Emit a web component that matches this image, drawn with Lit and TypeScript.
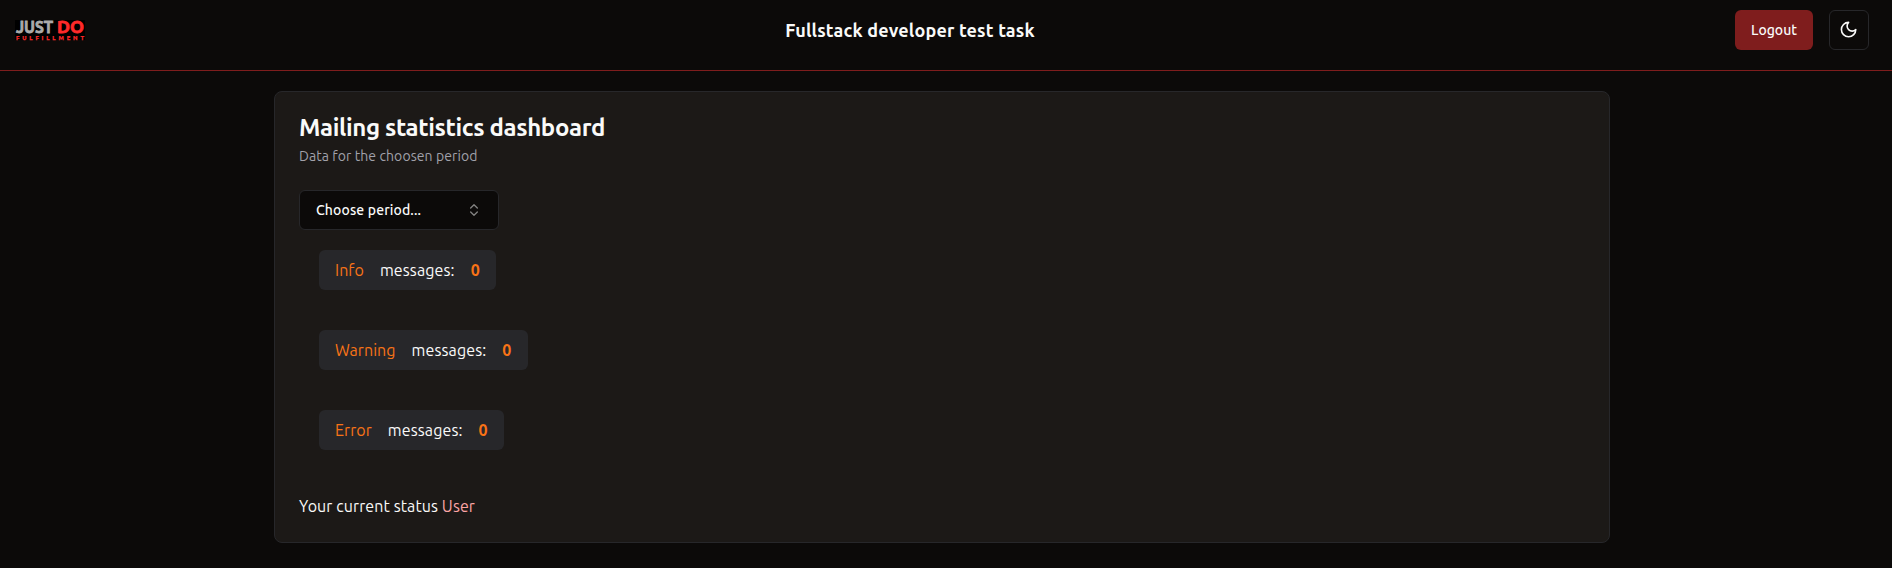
import { LitElement, html, css, svg } from "lit";
import { customElement, state } from "lit/decorators.js";

@customElement("app-root")
export class AppRoot extends LitElement {
  @state() private stats = [
    { kind: "Info", count: 0 },
    { kind: "Warning", count: 0 },
    { kind: "Error", count: 0 },
  ];

  static styles = css`
    :host { display: block; min-height: 100vh; background: #0c0a09; color: #fafaf9; font: 16px/24px Ubuntu, "Noto Sans", sans-serif; }
    * { box-sizing: border-box; }
    header { display: flex; justify-content: space-between; align-items: flex-start; height: 71px; padding: 10px 23px 0 15px; border-bottom: 1px solid #7f1d1d; }
    .logo { display: block; margin-top: 10px; overflow: visible; }
    .logo text { font-family: Ubuntu, "Noto Sans", sans-serif; font-weight: 700; }
    .brand { font-size: 18px; line-height: 28px; font-weight: 700; margin-top: 6px; letter-spacing: 0.17px; white-space: nowrap; }
    .actions { display: flex; gap: 16px; }
    button { display: inline-flex; align-items: center; font: inherit; font-size: 14px; line-height: 20px; font-weight: 500; color: #fafaf9; height: 40px; margin: 0; border-radius: 6px; white-space: nowrap; }
    .logout { width: 78px; justify-content: center; padding: 0; background: #7f1d1d; border: 0; }
    .theme { width: 40px; justify-content: center; padding: 0; background: #0c0a09; border: 1px solid #27272a; }
    main { width: 1336px; height: 452px; margin: 20px 0 0 274px; padding: 24px; background: #1c1917; border: 1px solid #27272a; border-radius: 8px; }
    h1 { margin: 0; font-size: 24px; line-height: 24px; font-weight: 700; letter-spacing: -0.36px; }
    .desc { margin: 6px 0 24px; font-size: 14px; line-height: 20px; color: #a1a1aa; letter-spacing: 0.08px; }
    .select { display: flex; width: 200px; justify-content: space-between; padding: 0 16px; background: #0c0a09; border: 1px solid #27272a; letter-spacing: 0.13px; }
    .stats { display: flex; flex-direction: column; align-items: flex-start; gap: 40px; padding: 20px; }
    .stat { display: flex; gap: 16px; padding: 8px 16px; height: 40px; background: #27272a; border-radius: 6px; }
    .kind, .count { color: #f97316; }
    .kind { letter-spacing: 0.06px; }
    .label { letter-spacing: 0.12px; }
    .count { font-weight: 700; letter-spacing: 0.4px; }
    .status { margin: 24px 0 0; letter-spacing: 0.1px; }
    .role { color: #fca5a5; }
  `;

  private logo() {
    return svg`<svg class="logo" width="70" height="20" viewBox="0 0 70 20">
      <rect width="70" height="20" fill="#000"/>
      <text x="1" y="12.7" font-size="17" fill="#aaa" stroke="#aaa" stroke-width=".8" textLength="37" lengthAdjust="spacingAndGlyphs">JUST</text>
      <text x="42" y="12.7" font-size="17" fill="#ff2a2a" stroke="#ff2a2a" stroke-width=".8" textLength="27" lengthAdjust="spacingAndGlyphs">DO</text>
      <text x="1" y="19.8" font-size="6" fill="#ff2a2a" stroke="#ff2a2a" stroke-width=".25" textLength="68" lengthAdjust="spacing">FULFILLMENT</text>
    </svg>`;
  }

  render() {
    return html`
      <header>
        ${this.logo()}
        <div class="brand">Fullstack developer test task</div>
        <div class="actions">
          <button class="logout">Logout</button>
          <button class="theme" aria-label="Toggle theme">
            <svg width="19.2" height="19.2" viewBox="0 0 24 24" fill="none" stroke="#fafaf9" stroke-width="2" stroke-linecap="round" stroke-linejoin="round"><path d="M12 3a6 6 0 0 0 9 9 9 9 0 1 1-9-9Z"/></svg>
          </button>
        </div>
      </header>
      <main>
        <h1>Mailing statistics dashboard</h1>
        <p class="desc">Data for the choosen period</p>
        <button class="select">
          <span>Choose period...</span>
          <svg width="16" height="16" viewBox="0 0 24 24" fill="none" stroke="#fafaf9" stroke-opacity=".5" stroke-width="2" stroke-linecap="round" stroke-linejoin="round"><path d="m7 15 5 5 5-5M7 9l5-5 5 5"/></svg>
        </button>
        <div class="stats">
          ${this.stats.map((s) => html`<div class="stat"><span class="kind">${s.kind}</span><span class="label">messages:</span><span class="count">${s.count}</span></div>`)}
        </div>
        <p class="status">Your current status <span class="role">User</span></p>
      </main>
    `;
  }
}
